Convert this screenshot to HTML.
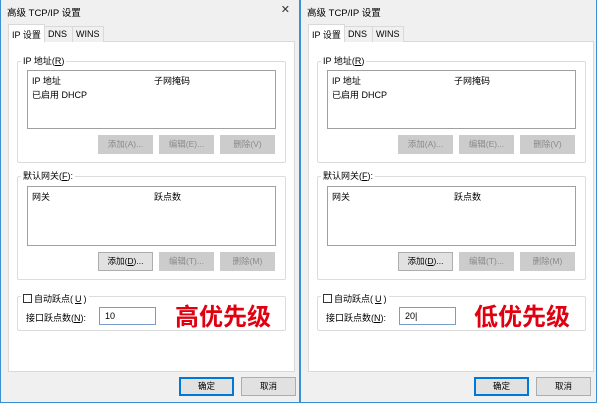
<!DOCTYPE html>
<html><head><meta charset="utf-8"><style>
*{margin:0;padding:0;box-sizing:border-box}
body{width:600px;height:403px;background:#fff;position:relative;overflow:hidden;font-family:"Liberation Sans","Noto Sans CJK SC",sans-serif;font-size:9px;color:#000}
.win{position:absolute;top:0;width:300px;height:403px;background:#f0f0f0;border:1px solid #3c8fd0;border-top:none}
.a{position:absolute;white-space:nowrap}
.title{left:6px;top:5px;font-size:9.5px}
.x{right:9px;top:3px;font-size:11px;color:#333;font-weight:normal;font-family:"DejaVu Sans",sans-serif}
.panel{left:7px;top:41px;width:287px;height:331px;background:#fff;border:1px solid #d9d9d9}
.tab{top:26px;height:16px;border:1px solid #d9d9d9;border-bottom:none;background:#f0f0f0;padding:2px 3px;font-size:9px}
.tab.sel{background:#fff;top:24px;height:18px;padding-top:3px;z-index:2}
.grp{border:1px solid #dcdcdc;border-radius:2px}
.lbl{background:#fff;padding:0 2px;font-size:9px}
.list{border:1px solid #a0a0a0;background:#fff}
.btn{height:19px;width:55px;background:#cccccc;border:1px solid #cccccc;color:#8a8a8a;text-align:center;line-height:17px;font-size:8.5px}
.btn.en{background:#e1e1e1;border-color:#adadad;color:#000}
.btn.def{border:2px solid #0078d7;line-height:15px}
.inp{border:1px solid #7a9cc6;background:#fff;height:18px;width:57px;padding:3px 5px;font-size:9px}
.red{color:#e00010;font-weight:bold;font-size:24px}
.cb{width:9px;height:9px;border:1px solid #333;background:#fff}
</style></head><body>

<div class="win" style="left:0">
 <div class="a title">高级 TCP/IP 设置</div><div class="a x">✕</div>
 <div class="a panel"></div>
 <div class="a tab sel" style="left:7px;width:37px">IP 设置</div>
 <div class="a tab" style="left:43px;width:29px">DNS</div>
 <div class="a tab" style="left:71px;width:32px">WINS</div>
 <div class="a grp" style="left:16px;top:61px;width:269px;height:102px"></div>
 <div class="a lbl" style="left:20px;top:54px">IP 地址(<u>R</u>)</div>
 <div class="a list" style="left:26px;top:70px;width:249px;height:59px"></div>
 <div class="a" style="left:31px;top:74px">IP 地址</div><div class="a" style="left:153px;top:74px">子网掩码</div>
 <div class="a" style="left:31px;top:88px">已启用 DHCP</div>
 <div class="a btn" style="left:97px;top:135px">添加(A)...</div>
 <div class="a btn" style="left:158px;top:135px">编辑(E)...</div>
 <div class="a btn" style="left:219px;top:135px">删除(V)</div>
 <div class="a grp" style="left:16px;top:176px;width:269px;height:104px"></div>
 <div class="a lbl" style="left:20px;top:169px">默认网关(<u>F</u>):</div>
 <div class="a list" style="left:26px;top:186px;width:249px;height:60px"></div>
 <div class="a" style="left:31px;top:190px">网关</div><div class="a" style="left:153px;top:190px">跃点数</div>
 <div class="a btn en" style="left:97px;top:252px">添加(<u>D</u>)...</div>
 <div class="a btn" style="left:158px;top:252px">编辑(T)...</div>
 <div class="a btn" style="left:219px;top:252px">删除(M)</div>
 <div class="a grp" style="left:16px;top:296px;width:269px;height:35px"></div>
 <div class="a lbl" style="left:20px;top:292px;display:flex;align-items:center;gap:2px"><span class="cb"></span>自动跃点(<u>U</u>)</div>
 <div class="a" style="left:25px;top:311px">接口跃点数(<u>N</u>):</div>
 <div class="a inp" style="left:98px;top:307px">10</div>
 <div class="a red" style="left:174px;top:297px">高优先级</div>
 <div class="a btn en def" style="left:178px;top:377px">确定</div>
 <div class="a btn en" style="left:240px;top:377px">取消</div>
</div>

<div class="win" style="left:300px;width:297px">
 <div class="a title">高级 TCP/IP 设置</div>
 <div class="a panel" style="width:286px"></div>
 <div class="a tab sel" style="left:7px;width:37px">IP 设置</div>
 <div class="a tab" style="left:43px;width:29px">DNS</div>
 <div class="a tab" style="left:71px;width:32px">WINS</div>
 <div class="a grp" style="left:16px;top:61px;width:269px;height:102px"></div>
 <div class="a lbl" style="left:20px;top:54px">IP 地址(<u>R</u>)</div>
 <div class="a list" style="left:26px;top:70px;width:249px;height:59px"></div>
 <div class="a" style="left:31px;top:74px">IP 地址</div><div class="a" style="left:153px;top:74px">子网掩码</div>
 <div class="a" style="left:31px;top:88px">已启用 DHCP</div>
 <div class="a btn" style="left:97px;top:135px">添加(A)...</div>
 <div class="a btn" style="left:158px;top:135px">编辑(E)...</div>
 <div class="a btn" style="left:219px;top:135px">删除(V)</div>
 <div class="a grp" style="left:16px;top:176px;width:269px;height:104px"></div>
 <div class="a lbl" style="left:20px;top:169px">默认网关(<u>F</u>):</div>
 <div class="a list" style="left:26px;top:186px;width:249px;height:60px"></div>
 <div class="a" style="left:31px;top:190px">网关</div><div class="a" style="left:153px;top:190px">跃点数</div>
 <div class="a btn en" style="left:97px;top:252px">添加(<u>D</u>)...</div>
 <div class="a btn" style="left:158px;top:252px">编辑(T)...</div>
 <div class="a btn" style="left:219px;top:252px">删除(M)</div>
 <div class="a grp" style="left:16px;top:296px;width:269px;height:35px"></div>
 <div class="a lbl" style="left:20px;top:292px;display:flex;align-items:center;gap:2px"><span class="cb"></span>自动跃点(<u>U</u>)</div>
 <div class="a" style="left:25px;top:311px">接口跃点数(<u>N</u>):</div>
 <div class="a inp" style="left:98px;top:307px">20|</div>
 <div class="a red" style="left:173px;top:297px">低优先级</div>
 <div class="a btn en def" style="left:173px;top:377px">确定</div>
 <div class="a btn en" style="left:235px;top:377px">取消</div>
</div>
</body></html>
